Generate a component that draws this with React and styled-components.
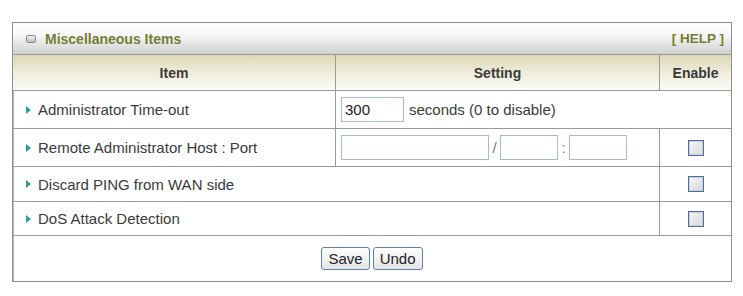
import styled, { createGlobalStyle } from "styled-components";

const GlobalStyle = createGlobalStyle`
  body {
    margin: 0;
    background: #fff;
    font-family: "Liberation Sans", Arial, sans-serif;
    font-size: 15px;
    color: #333;
  }
`;

const rows = [
  { label: "Administrator Time-out", kind: "timeout" },
  { label: "Remote Administrator Host : Port", kind: "remote" },
  { label: "Discard PING from WAN side", kind: "check" },
  { label: "DoS Attack Detection", kind: "check" },
];

const App = () => {
  return (
    <Page>
      <GlobalStyle />
      <Panel>
        <TitleBar>
          <TitleIcon />
          <Title>Miscellaneous Items</Title>
          <Help href="#!">[ HELP ]</Help>
        </TitleBar>
        <HeadRow>
          <HeadCell>Item</HeadCell>
          <HeadCell>Setting</HeadCell>
          <HeadCell>Enable</HeadCell>
        </HeadRow>
        {rows.map((row, i) => (
          <Row key={row.label} $height={i < 2 ? 38 : i === 2 ? 35 : 34}>
            <Cell $span={row.kind === "check" ? 2 : 1}>
              <Bullet />
              {row.label}
            </Cell>
            {row.kind === "timeout" && (
              <Cell $span={2}>
                <TextInput $width={63} defaultValue="300" />
                <Note>seconds (0 to disable)</Note>
              </Cell>
            )}
            {row.kind === "remote" && (
              <Cell>
                <TextInput $width={148} />
                <Sep>/</Sep>
                <TextInput $width={58} />
                <Sep>:</Sep>
                <TextInput $width={58} />
              </Cell>
            )}
            {row.kind !== "timeout" && (
              <Cell $center>
                <Check />
              </Cell>
            )}
          </Row>
        ))}
        <Footer>
          <Button>Save</Button>
          <Button>Undo</Button>
        </Footer>
      </Panel>
    </Page>
  );
};

export default App;

const Page = styled.div`
  padding: 22px 11px 0 12px;
`;

const Panel = styled.div`
  width: 720px;
  box-sizing: border-box;
  border: 1px solid #8e8e8e;
  box-shadow: inset 1px 1px 0 #b8b8b8;
`;

const TitleBar = styled.div`
  height: 31px;
  display: flex;
  align-items: center;
  padding: 0 7px 0 13px;
  background: linear-gradient(#ffffff 0%, #f7f7f7 40%, #d0d0d0 100%);
  border-bottom: 1px solid #9a9a9a;
`;

const TitleIcon = styled.span`
  width: 8px;
  height: 6px;
  border: 1px solid #8a8a8a;
  border-radius: 2px;
  background: linear-gradient(#f4f4f4, #bdbdbd);
  margin-right: 9px;
`;

const Title = styled.span`
  font-weight: bold;
  font-size: 14px;
  color: #737f33;
  flex: 1;
`;

const Help = styled.a`
  font-weight: bold;
  font-size: 13.5px;
  color: #737f33;
  text-decoration: none;
`;

const grid = `
  display: grid;
  grid-template-columns: 322px 324px 1fr;
`;

const HeadRow = styled.div`
  ${grid}
  height: 35px;
  background: linear-gradient(#dcd8b6 0%, #eeecda 50%, #fcfcf8 100%);
  border-bottom: 1px solid #9a9a9a;
`;

const HeadCell = styled.div`
  display: flex;
  align-items: center;
  justify-content: center;
  font-weight: bold;
  font-size: 14px;
  color: #3a3a3a;
  & + & {
    border-left: 1px solid #9a9a9a;
  }
`;

const Row = styled.div`
  ${grid}
  height: ${(p) => p.$height - 1}px;
  border-bottom: 1px solid #9a9a9a;
`;

const Cell = styled.div`
  grid-column: span ${(p) => p.$span || 1};
  display: flex;
  align-items: center;
  justify-content: ${(p) => (p.$center ? "center" : "flex-start")};
  padding-left: ${(p) => (p.$center ? 0 : 5)}px;
  color: #3a3a3a;
  & + & {
    border-left: 1px solid #9a9a9a;
  }
  &:first-child {
    padding-left: 13px;
  }
`;

const Bullet = styled.span`
  width: 0;
  height: 0;
  border-top: 4px solid transparent;
  border-bottom: 4px solid transparent;
  border-left: 5px solid #2e9c9a;
  margin-right: 7px;
`;

const TextInput = styled.input`
  box-sizing: border-box;
  width: ${(p) => p.$width}px;
  height: 25px;
  border: 1px solid #a7b9cc;
  padding: 0 3px;
  font-family: "Liberation Sans", Arial, sans-serif;
  font-size: 15px;
  color: #222;
  outline: none;
`;

const Note = styled.span`
  margin-left: 5px;
`;

const Sep = styled.span`
  width: 11px;
  text-align: center;
  color: #777;
`;

const Check = styled.span`
  width: 14px;
  height: 14px;
  border: 1px solid #4c6e99;
  box-shadow: inset 0 0 0 1px #c8d2de;
  background: linear-gradient(135deg, #f6f6f6, #d8d8d8);
`;

const Footer = styled.div`
  height: 45px;
  display: flex;
  align-items: center;
  justify-content: center;
  gap: 3px;
`;

const Button = styled.button`
  height: 23px;
  padding: 0 6px;
  border: 1px solid #5f7fa6;
  border-radius: 3px;
  background: linear-gradient(#ffffff, #e4e4e4);
  font-family: "Liberation Sans", Arial, sans-serif;
  font-size: 15px;
  color: #222;
`;
